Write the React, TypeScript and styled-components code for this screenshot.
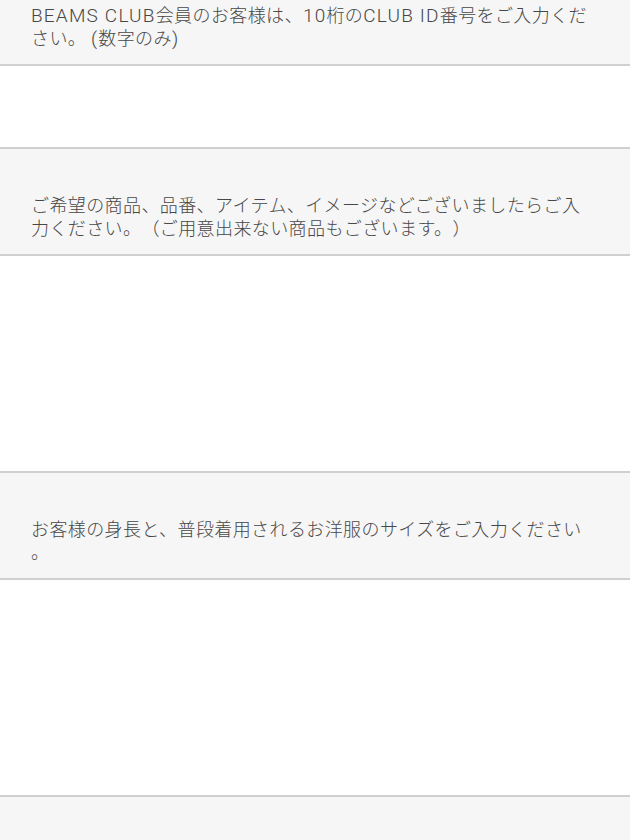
import React from "react";
import styled, { createGlobalStyle } from "styled-components";

const Global = createGlobalStyle`
  html, body { margin: 0; padding: 0; background: #f6f6f6; }
  body {
    font-family: Roboto, "Noto Sans CJK JP", "Noto Sans", sans-serif;
    -webkit-font-smoothing: antialiased;
  }
  * { box-sizing: border-box; }
`;

const Form = styled.form`
  display: flex;
  flex-direction: column;
  width: 630px;
  min-height: 840px;
  background: #f6f6f6;
`;

const Label = styled.label<{ $top: number }>`
  display: block;
  padding: ${(p) => p.$top}px 30px 14px 31px;
  font-size: 18px;
  font-weight: 300;
  line-height: 23px;
  letter-spacing: 0.4px;
  color: #474747;
  background: #f6f6f6;
  text-spacing-trim: space-all;
`;

const Latin = styled.span`
  font-family: Roboto, sans-serif;
  font-size: 19px;
  letter-spacing: 1.2px;
`;

const Input = styled.input`
  display: block;
  width: 100%;
  height: 85px;
  margin: 0;
  padding: 0 31px;
  border: none;
  border-top: 2px solid #d0d0d0;
  border-bottom: 2px solid #d0d0d0;
  background: #fff;
  font: inherit;
  outline: none;
`;

const TextArea = styled.textarea`
  display: block;
  width: 100%;
  height: 219px;
  margin: 0;
  padding: 0 31px;
  border: none;
  border-top: 2px solid #d0d0d0;
  border-bottom: 2px solid #d0d0d0;
  background: #fff;
  font: inherit;
  resize: none;
  outline: none;
`;

const Spacer = styled.div`
  flex: 1;
  background: #f6f6f6;
`;

export default function App() {
  return (
    <>
      <Global />
      <Form>
        <Label $top={4}>
          <Latin>BEAMS CLUB</Latin>会員のお客様は、<Latin>10</Latin>桁の
          <Latin>CLUB ID</Latin>番号をご入力くだ
          <br />
          さい。 <Latin>(</Latin>数字のみ<Latin>)</Latin>
        </Label>
        <Input type="text" />
        <Label $top={45}>
          ご希望の商品、品番、アイテム、イメージなどございましたらご入
          <br />
          力ください。（ご用意出来ない商品もございます。）
        </Label>
        <TextArea />
        <Label $top={45}>
          お客様の身長と、普段着用されるお洋服のサイズをご入力ください
          <br />。
        </Label>
        <TextArea />
        <Spacer />
      </Form>
    </>
  );
}
